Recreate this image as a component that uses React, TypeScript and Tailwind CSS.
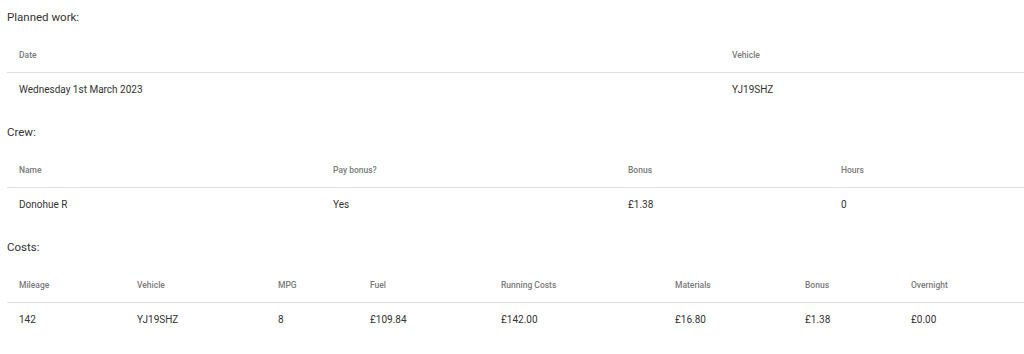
import React from 'react';

type Col = { label: string; w: string };

const planned: { cols: Col[]; row: string[] } = {
  cols: [
    { label: 'Date', w: 'w-[713px]' },
    { label: 'Vehicle', w: 'w-auto' },
  ],
  row: ['Wednesday 1st March 2023', 'YJ19SHZ'],
};

const crew: { cols: Col[]; row: string[] } = {
  cols: [
    { label: 'Name', w: 'w-[314px]' },
    { label: 'Pay bonus?', w: 'w-[295px]' },
    { label: 'Bonus', w: 'w-[213px]' },
    { label: 'Hours', w: 'w-auto' },
  ],
  row: ['Donohue R', 'Yes', '£1.38', '0'],
};

const costs: { cols: Col[]; row: string[] } = {
  cols: [
    { label: 'Mileage', w: 'w-[118px]' },
    { label: 'Vehicle', w: 'w-[141px]' },
    { label: 'MPG', w: 'w-[92px]' },
    { label: 'Fuel', w: 'w-[131px]' },
    { label: 'Running Costs', w: 'w-[174px]' },
    { label: 'Materials', w: 'w-[130px]' },
    { label: 'Bonus', w: 'w-[106px]' },
    { label: 'Overnight', w: 'w-auto' },
  ],
  row: ['142', 'YJ19SHZ', '8', '£109.84', '£142.00', '£16.80', '£1.38', '£0.00'],
};

function Section({ title, cols, row, first }: { title: string; cols: Col[]; row: string[]; first?: boolean }) {
  return (
    <div className={first ? '' : 'mt-[11px]'}>
      <div className="pt-[9px] pb-[11px] text-[11.5px] leading-[16px] text-[#333]">{title}</div>
      <table className="w-full table-fixed border-collapse">
        <thead>
          <tr className="h-[36px] border-b border-[#e0e0e0]">
            {cols.map((c) => (
              <th
                key={c.label}
                className={`${c.w} pl-[12px] pt-[2px] text-left align-middle text-[8.5px] font-medium leading-[12px] text-[#7a7a7a]`}
              >
                {c.label}
              </th>
            ))}
          </tr>
        </thead>
        <tbody>
          <tr className="h-[32px]">
            {row.map((v, i) => (
              <td key={i} className="pl-[12px] pt-[3px] text-left align-middle text-[10px] leading-[14px] text-[#333]">
                {v}
              </td>
            ))}
          </tr>
        </tbody>
      </table>
    </div>
  );
}

export default function App() {
  return (
    <div className="min-h-[354px] bg-white pl-[7px] font-['Roboto',sans-serif]">
      <Section title="Planned work:" cols={planned.cols} row={planned.row} first />
      <Section title="Crew:" cols={crew.cols} row={crew.row} />
      <Section title="Costs:" cols={costs.cols} row={costs.row} />
    </div>
  );
}
